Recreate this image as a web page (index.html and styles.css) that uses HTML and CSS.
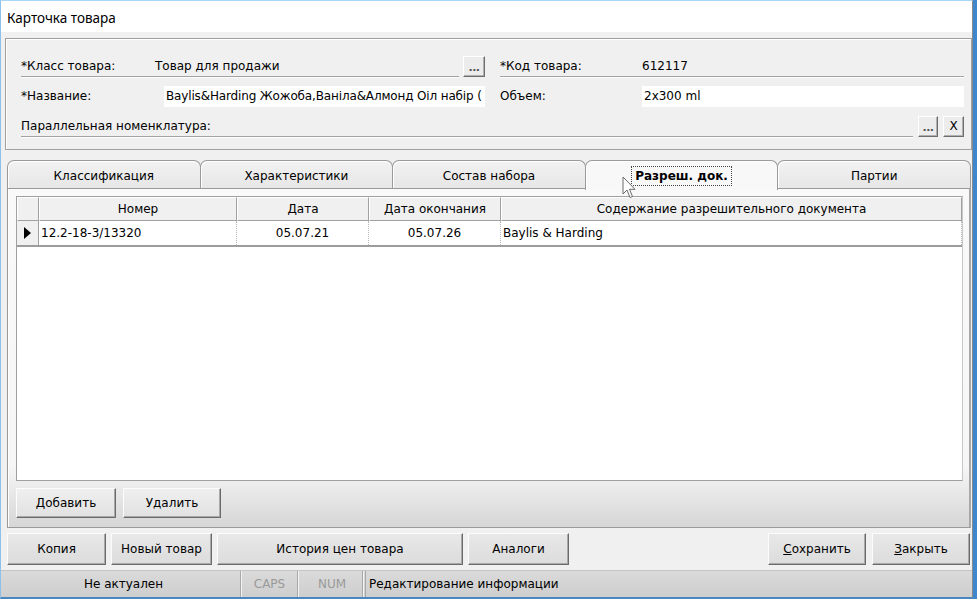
FILE: index.html
```html
<!DOCTYPE html>
<html lang="ru">
<head>
<meta charset="utf-8">
<title>Карточка товара</title>
<link rel="stylesheet" href="styles.css">
</head>
<body>
<div class="window">
  <div class="titlebar">Карточка товара</div>
  <div class="client">
    <div class="panel">
      <div class="row">
        <div class="group">
          <div class="field line">
            <span class="lbl w134">*Класс товара:</span>
            <span class="val">Товар для продажи</span>
          </div>
          <button class="sbtn dots">...</button>
        </div>
        <div class="group">
          <div class="field line">
            <span class="lbl w142">*Код товара:</span>
            <span class="val">612117</span>
          </div>
        </div>
      </div>
      <div class="row">
        <div class="group">
          <span class="lbl w143">*Название:</span>
          <div class="input"><span class="itext">Baylis&amp;Harding Жожоба,Ваніла&amp;Алмонд Оіл набір (</span></div>
        </div>
        <div class="group">
          <span class="lbl w142">Объем:</span>
          <div class="input">2x300 ml</div>
        </div>
      </div>
      <div class="row">
        <div class="field line wide">
          <span class="lbl">Параллельная номенклатура:</span>
        </div>
        <button class="sbtn dots small">...</button>
        <button class="sbtn small x">X</button>
      </div>
    </div>

    <div class="tabs">
      <div class="tab">Классификация</div>
      <div class="tab">Характеристики</div>
      <div class="tab">Состав набора</div>
      <div class="tab active"><span class="focus">Разреш. док.</span></div>
      <div class="tab">Партии</div>
    </div>

    <div class="page">
      <div class="grid">
        <div class="ghead">
          <div class="gcell ind"></div>
          <div class="gcell c1">Номер</div>
          <div class="gcell c2">Дата</div>
          <div class="gcell c3">Дата окончания</div>
          <div class="gcell c4">Содержание разрешительного документа</div>
        </div>
        <div class="grow">
          <div class="rcell ind"><span class="tri"></span></div>
          <div class="rcell c1 left">12.2-18-3/13320</div>
          <div class="rcell c2">05.07.21</div>
          <div class="rcell c3">05.07.26</div>
          <div class="rcell c4 left">Baylis &amp; Harding</div>
        </div>
      </div>
      <div class="pbuttons">
        <button class="btn b100">Добавить</button>
        <button class="btn b98">Удалить</button>
      </div>
    </div>

    <div class="actions">
      <button class="btn abtn w99">Копия</button>
      <button class="btn abtn w101">Новый товар</button>
      <button class="btn abtn w246">История цен товара</button>
      <button class="btn abtn w101">Аналоги</button>
      <div class="spacer"></div>
      <button class="btn abtn w98"><u>С</u>охранить</button>
      <button class="btn abtn w98"><u>З</u>акрыть</button>
    </div>

    <div class="status">
      <div class="sp s1">Не актуален</div>
      <div class="sp s2 dim">CAPS</div>
      <div class="sp s3 dim">NUM</div>
      <div class="sp s4">Редактирование информации</div>
    </div>
  </div>

  <svg class="cursor" width="14" height="24" viewBox="0 0 14 24">
    <path d="M1 1 L1 18 L5 14 L8 21.5 L10.5 20.5 L7.5 13.3 L13 13.3 Z" fill="#fff" stroke="#6a6a6a" stroke-width="1" stroke-linejoin="round"/>
  </svg>
</div>
</body>
</html>
```

FILE: styles.css
```css
* { box-sizing: border-box; }
html, body {
  margin: 0;
  padding: 0;
  width: 977px;
  height: 599px;
  overflow: hidden;
  background: #3f86cc;
}
body {
  font-family: "DejaVu Sans", Tahoma, sans-serif;
  font-size: 12px;
  color: #000;
}
.window {
  position: relative;
  width: 973px;
  height: 599px;
  background: #f0f0f0;
  border-left: 1px solid #8fc0ea;
  border-top: 1px solid #a9d6f7;
  border-right: 1px solid #8a8a8a;
  border-bottom: 2px solid #4a86c0;
  display: flex;
  flex-direction: column;
}
.titlebar {
  height: 31px;
  background: #fff;
  font-family: "Noto Sans", "Open Sans", sans-serif;
  font-size: 13.5px;
  padding-left: 6px;
  display: flex;
  align-items: center;
  padding-top: 2px;
}
.client {
  flex: 1;
  display: flex;
  flex-direction: column;
  padding: 6px 0 0 6px;
}

/* header panel */
.panel {
  margin-left: -2px;
  border: 1px solid #a0a0a0;
  box-shadow: inset 1px 1px 0 #fff;
  padding: 12px 7px 7px 15px;
  height: 112px;
}
.row {
  display: flex;
  align-items: center;
  height: 30px;
}
.group {
  display: flex;
  align-items: center;
  width: 464px;
}
.group + .group { margin-left: 15px; }
.field {
  display: flex;
  align-items: center;
  height: 21px;
  flex: 1;
}
.line {
  border-bottom: 1px solid #a3a3a3;
  box-shadow: 0 1px 0 #fdfdfd;
}
.lbl { white-space: nowrap; flex: none; }
.w134 { width: 134px; }
.w142 { width: 142px; }
.w143 { width: 143px; }
.val { white-space: nowrap; }
.input {
  flex: 1;
  min-width: 0;
  height: 21px;
  background: #fff;
  display: flex;
  align-items: center;
  padding-left: 2px;
  white-space: nowrap;
  overflow: hidden;
}
.itext { letter-spacing: -0.15px; }
.sbtn {
  font-family: "DejaVu Sans", Tahoma, sans-serif;
  width: 22px;
  height: 21px;
  margin-left: 4px;
  padding: 0;
  background: #ececec;
  border: 1px solid;
  border-color: #fff #6d6d6d #6d6d6d #fff;
  box-shadow: inset -1px -1px 0 #b0b0b0;
  font-size: 11px;
  color: #000;
}
.sbtn.dots { line-height: 12px; padding-top: 4px; letter-spacing: -0.5px; font-weight: bold; color: #555; }
.sbtn.small { width: 20px; margin-left: 5px; }
.sbtn.x { width: 21px; font-size: 12px; font-weight: normal; }

/* tabs */
.tabs {
  display: flex;
  margin-top: 10px;
  height: 29px;
  position: relative;
  z-index: 2;
  margin-right: 1px;
}
.tab {
  flex: 1;
  height: 29px;
  border: 1px solid #9a9a9a;
  border-bottom: none;
  border-radius: 7px 7px 0 0;
  background: linear-gradient(#f2f2f2, #e6e6e6);
  box-shadow: inset 1px 1px 0 #fff;
  display: flex;
  align-items: center;
  justify-content: center;
  margin-left: -1px;
  padding-top: 1px;
  position: relative;
}
.tab:first-child { margin-left: 0; }
.tab::after {
  content: "";
  position: absolute;
  left: 0; right: 0; bottom: 0;
  height: 1px;
  background: #9a9a9a;
}
.tab.active {
  background: #f8f8f8;
  font-weight: bold;
  height: 30px;
  margin-bottom: -1px;
  z-index: 3;
}
.tab.active::after { display: none; }
.focus {
  border: 1px dotted #444;
  padding: 2px 3px 2px 3px;
}

/* page */
.page {
  height: 339px;
  margin-right: 1px;
  border: 1px solid #9a9a9a;
  border-top: none;
  border-right: 2px solid #a8a8a8;
  background: linear-gradient(#f9f9f9 0%, #f6f6f6 82%, #d6d6d6 100%);
  box-shadow: inset 1px 0 0 #fff;
  padding: 7px 6px 8px 8px;
  display: flex;
  flex-direction: column;
}
.grid {
  height: 285px;
  background: #fff;
  border: 1px solid #a0a0a0;
  border-right-color: #c8c8c8;
  display: flex;
  flex-direction: column;
}
.ghead, .grow { display: flex; }
.ghead { height: 24px; }
.gcell {
  background: #f0f0f0;
  border-top: 1px solid #fff;
  border-left: 1px solid #fff;
  border-right: 1px solid #a0a0a0;
  border-bottom: 1px solid #a0a0a0;
  display: flex;
  align-items: center;
  justify-content: center;
  white-space: nowrap;
}
.ind { width: 22px; flex: none; }
.c1 { width: 198px; flex: none; }
.c2 { width: 132px; flex: none; }
.c3 { width: 132px; flex: none; }
.c4 { flex: 1; }
.grow {
  height: 26px;
  border-bottom: 2px solid #9c9c9c;
}
.rcell {
  display: flex;
  align-items: center;
  justify-content: center;
  border-right: 1px dotted #b8b8b8;
  white-space: nowrap;
}
.rcell.ind {
  background: #f0f0f0;
  border-right: 1px solid #a0a0a0;
  justify-content: flex-start;
  padding-left: 7px;
}
.rcell.left { justify-content: flex-start; padding-left: 2px; }
.tri {
  width: 0; height: 0;
  border-top: 6px solid transparent;
  border-bottom: 6px solid transparent;
  border-left: 7px solid #000;
}
.pbuttons {
  display: flex;
  gap: 7px;
  margin-top: 7px;
}

/* buttons */
.btn {
  font-family: "DejaVu Sans", Tahoma, sans-serif;
  font-size: 12px;
  color: #000;
  height: 30px;
  padding: 0;
  background: linear-gradient(#efefef, #e1e1e1);
  border: 1px solid;
  border-color: #fcfcfc #6b6b6b #6b6b6b #fcfcfc;
  box-shadow: inset -1px -1px 0 #a8a8a8;
}
.b100 { width: 100px; }
.b98 { width: 98px; }
.actions {
  display: flex;
  margin-top: 5px;
  height: 32px;
  gap: 5px;
  padding-right: 2px;
}
.abtn { height: 32px; background: linear-gradient(#e8e8e8, #dcdcdc); }
.w99 { width: 99px; }
.w101 { width: 101px; }
.w246 { width: 246px; }
.w98 { width: 98px; }
.spacer { flex: 1; }
.actions .abtn:last-child { margin-left: 1px; }

/* status */
.status {
  display: flex;
  margin-top: 5px;
  height: 27px;
  margin-left: -6px;
  padding-left: 6px;
  background: linear-gradient(#dadada, #cecece);
  border-top: 1px solid #c4c4c4;
}
.sp {
  display: flex;
  align-items: center;
  border-right: 1px solid #a8a8a8;
  box-shadow: 1px 0 0 #f4f4f4;
  white-space: nowrap;
  height: 100%;
}
.s1 { width: 234px; justify-content: center; }
.s2 { width: 56px; justify-content: center; margin-left: 1px; }
.s3 { width: 61px; justify-content: center; margin-left: 4px; }
.s4 { flex: 1; padding-left: 3px; border-right: none; box-shadow: none; border-left: 1px solid #a8a8a8; margin-left: 2px; }
.dim { color: #9a9a9a; }

.cursor {
  position: absolute;
  left: 621px;
  top: 175px;
  z-index: 10;
}
```
